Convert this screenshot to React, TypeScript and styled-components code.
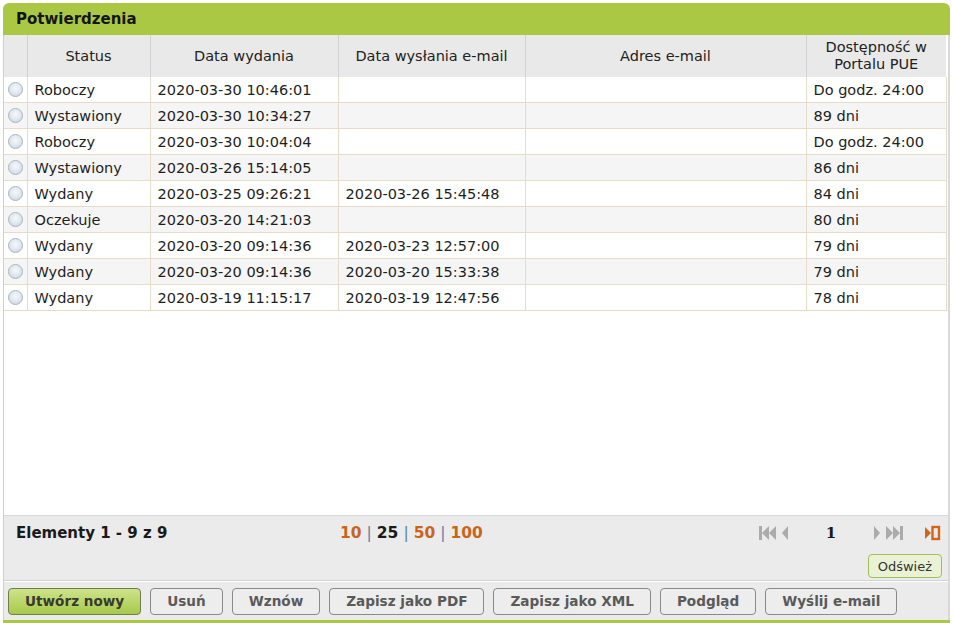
import styled, { createGlobalStyle } from "styled-components"

const GlobalStyle = createGlobalStyle`
    body {
        margin: 0;
        background: #FFFFFF;
        font-family: "DejaVu Sans", Verdana, sans-serif;
    }
`

const Panel = styled.div`
    margin: 3px 3px 0 3px;
    width: 947px;
    height: 620px;
    box-sizing: border-box;
    display: flex;
    flex-direction: column;
    border-bottom: 3px solid #ABC845;
`

const TitleBar = styled.div`
    height: 32px;
    flex: 0 0 32px;
    box-sizing: border-box;
    padding-left: 13px;
    display: flex;
    align-items: center;

    background: #ABC845;
    border-radius: 6px 6px 0 0;
    font-size: 15px;
    font-weight: bold;
    color: #151515;
`

const Body = styled.div`
    flex: 1;
    display: flex;
    flex-direction: column;
    border-left: 1px solid #CFCFCF;
    border-right: 2px solid #D9D9D9;
`

const GridArea = styled.div`
    flex: 1;
    background: #FFFFFF;
`

const Table = styled.table`
    width: 942px;
    border-collapse: collapse;
    table-layout: fixed;
    font-size: 14.5px;
    color: #1E1E1E;
`

const HeadCell = styled.th<{ $w: number }>`
    width: ${p => p.$w}px;
    height: 42px;
    padding: 0 4px;
    box-sizing: border-box;
    background: #E9E9E9;
    border-right: 1px solid #D2D2D2;
    font-weight: normal;
    text-align: center;
    line-height: 17px;
    color: #222222;

    &:last-child {
        border-right: none;
    }
`

const Row = styled.tr<{ $alt: boolean }>`
    background: ${p => (p.$alt ? "#F5F5F5" : "#FFFFFF")};
`

const Cell = styled.td`
    height: 25px;
    padding: 0 0 0 7px;
    border: 1px solid #E8DCC8;
    border-top: none;
    white-space: nowrap;
    overflow: hidden;

    &:first-child {
        padding: 0;
        border-left: none;
        text-align: center;
    }
`

const Radio = styled.span`
    display: inline-block;
    width: 13px;
    height: 13px;
    margin-top: 3px;
    border-radius: 50%;
    border: 1px solid #AEB6C0;
    background: radial-gradient(circle at 50% 40%, #F6F9FC 0%, #DDE6EF 55%, #C6D0DB 100%);
`

const Footer = styled.div`
    flex: 0 0 66px;
    box-sizing: border-box;
    background: #EBEBEB;
    border-top: 1px solid #D8D8D8;
    border-bottom: 1px solid #D2D2D2;
    display: flex;
    flex-direction: column;
`

const PagerRow = styled.div`
    height: 33px;
    display: flex;
    align-items: center;
    padding: 0 7px 0 12px;
`

const Count = styled.div`
    width: 324px;
    font-size: 15px;
    font-weight: bold;
    color: #1A1A1A;
`

const Sizes = styled.div`
    flex: 1;
    font-size: 15.5px;
    font-weight: bold;
    display: flex;
    gap: 5px;
`

const SizeLink = styled.span<{ $active?: boolean }>`
    color: ${p => (p.$active ? "#1A1A1A" : "#C8651B")};
`

const Sep = styled.span`
    color: #5A7FA6;
    font-weight: normal;
`

const Pager = styled.div`
    display: flex;
    align-items: center;
`

const PageNum = styled.span`
    width: 84px;
    text-align: center;
    font-family: "DejaVu Serif", serif;
    font-weight: bold;
    font-size: 15px;
    color: #1A1A1A;
`

const Spacer = styled.span`
    width: 20px;
`

const RefreshRow = styled.div`
    display: flex;
    justify-content: flex-end;
    padding: 5px 6px 0 0;
`

const RefreshButton = styled.button`
    height: 24px;
    padding: 0 9px;
    background: #EAF2D6;
    border: 1px solid #9FBE5C;
    border-radius: 4px;
    font-family: "DejaVu Sans", sans-serif;
    font-size: 13px;
    color: #333333;
`

const ActionBar = styled.div`
    flex: 0 0 38px;
    display: flex;
    align-items: center;
    gap: 9px;
    padding: 0 4px;
    background: #EBEBEB;
    border-top: 1px solid #FFFFFF;
`

const ActionButton = styled.button<{ $primary?: boolean }>`
    height: 27px;
    padding: 0 16px;
    border-radius: 4px;
    border: 1px solid ${p => (p.$primary ? "#6E7F4A" : "#8A8A8A")};
    background: ${p => (p.$primary ? "linear-gradient(#CDE38C, #A8C94A)" : "#EDEDED")};
    font-family: "DejaVu Sans", sans-serif;
    font-size: 13.6px;
    font-weight: bold;
    color: ${p => (p.$primary ? "#3A3A2E" : "#5A5A5A")};
`

const columns = [
    { label: "", w: 23 },
    { label: "Status", w: 123 },
    { label: "Data wydania", w: 188 },
    { label: "Data wysłania e-mail", w: 187 },
    { label: "Adres e-mail", w: 281 },
    { label: "Dostępność w Portalu PUE", w: 140 },
]

const rows = [
    ["Roboczy", "2020-03-30 10:46:01", "", "Do godz. 24:00"],
    ["Wystawiony", "2020-03-30 10:34:27", "", "89 dni"],
    ["Roboczy", "2020-03-30 10:04:04", "", "Do godz. 24:00"],
    ["Wystawiony", "2020-03-26 15:14:05", "", "86 dni"],
    ["Wydany", "2020-03-25 09:26:21", "2020-03-26 15:45:48", "84 dni"],
    ["Oczekuje", "2020-03-20 14:21:03", "", "80 dni"],
    ["Wydany", "2020-03-20 09:14:36", "2020-03-23 12:57:00", "79 dni"],
    ["Wydany", "2020-03-20 09:14:36", "2020-03-20 15:33:38", "79 dni"],
    ["Wydany", "2020-03-19 11:15:17", "2020-03-19 12:47:56", "78 dni"],
]

const actions = ["Usuń", "Wznów", "Zapisz jako PDF", "Zapisz jako XML", "Podgląd", "Wyślij e-mail"]

function FirstIcon() {
    return <svg width="31" height="16" viewBox="0 0 31 16">
        <rect x="1" y="1" width="3" height="14" fill="#ABABAB" />
        <polygon points="11,1 4,8 11,15" fill="#ABABAB" />
        <polygon points="18,1 11,8 18,15" fill="#ABABAB" />
        <polygon points="30,1 24,8 30,15" fill="#ABABAB" />
    </svg>
}

function LastIcon() {
    return <svg width="31" height="16" viewBox="0 0 31 16">
        <polygon points="1,1 7,8 1,15" fill="#ABABAB" />
        <polygon points="13,1 20,8 13,15" fill="#ABABAB" />
        <polygon points="20,1 27,8 20,15" fill="#ABABAB" />
        <rect x="27" y="1" width="3" height="14" fill="#ABABAB" />
    </svg>
}

function GoIcon() {
    return <svg width="17" height="16" viewBox="0 0 17 16">
        <polygon points="1,2 7,8 1,14" fill="#D0661A" />
        <rect x="8.5" y="2" width="6.5" height="12" fill="none" stroke="#D0661A" strokeWidth="2.4" />
    </svg>
}

export default function App() {
    return <>
        <GlobalStyle />
        <Panel>
            <TitleBar>Potwierdzenia</TitleBar>
            <Body>
                <GridArea>
                    <Table>
                        <thead>
                            <tr>
                                {columns.map((c, i) =>
                                    <HeadCell key={i} $w={c.w}>{c.label}</HeadCell>)}
                            </tr>
                        </thead>
                        <tbody>
                            {rows.map((r, i) =>
                                <Row key={i} $alt={i % 2 === 1}>
                                    <Cell><Radio /></Cell>
                                    <Cell>{r[0]}</Cell>
                                    <Cell>{r[1]}</Cell>
                                    <Cell>{r[2]}</Cell>
                                    <Cell></Cell>
                                    <Cell>{r[3]}</Cell>
                                </Row>)}
                        </tbody>
                    </Table>
                </GridArea>
                <Footer>
                    <PagerRow>
                        <Count>Elementy 1 - 9 z 9</Count>
                        <Sizes>
                            <SizeLink>10</SizeLink>
                            <Sep>|</Sep>
                            <SizeLink $active>25</SizeLink>
                            <Sep>|</Sep>
                            <SizeLink>50</SizeLink>
                            <Sep>|</Sep>
                            <SizeLink>100</SizeLink>
                        </Sizes>
                        <Pager>
                            <FirstIcon />
                            <PageNum>1</PageNum>
                            <LastIcon />
                            <Spacer />
                            <GoIcon />
                        </Pager>
                    </PagerRow>
                    <RefreshRow>
                        <RefreshButton>Odśwież</RefreshButton>
                    </RefreshRow>
                </Footer>
                <ActionBar>
                    <ActionButton $primary>Utwórz nowy</ActionButton>
                    {actions.map(a => <ActionButton key={a}>{a}</ActionButton>)}
                </ActionBar>
            </Body>
        </Panel>
    </>
}
